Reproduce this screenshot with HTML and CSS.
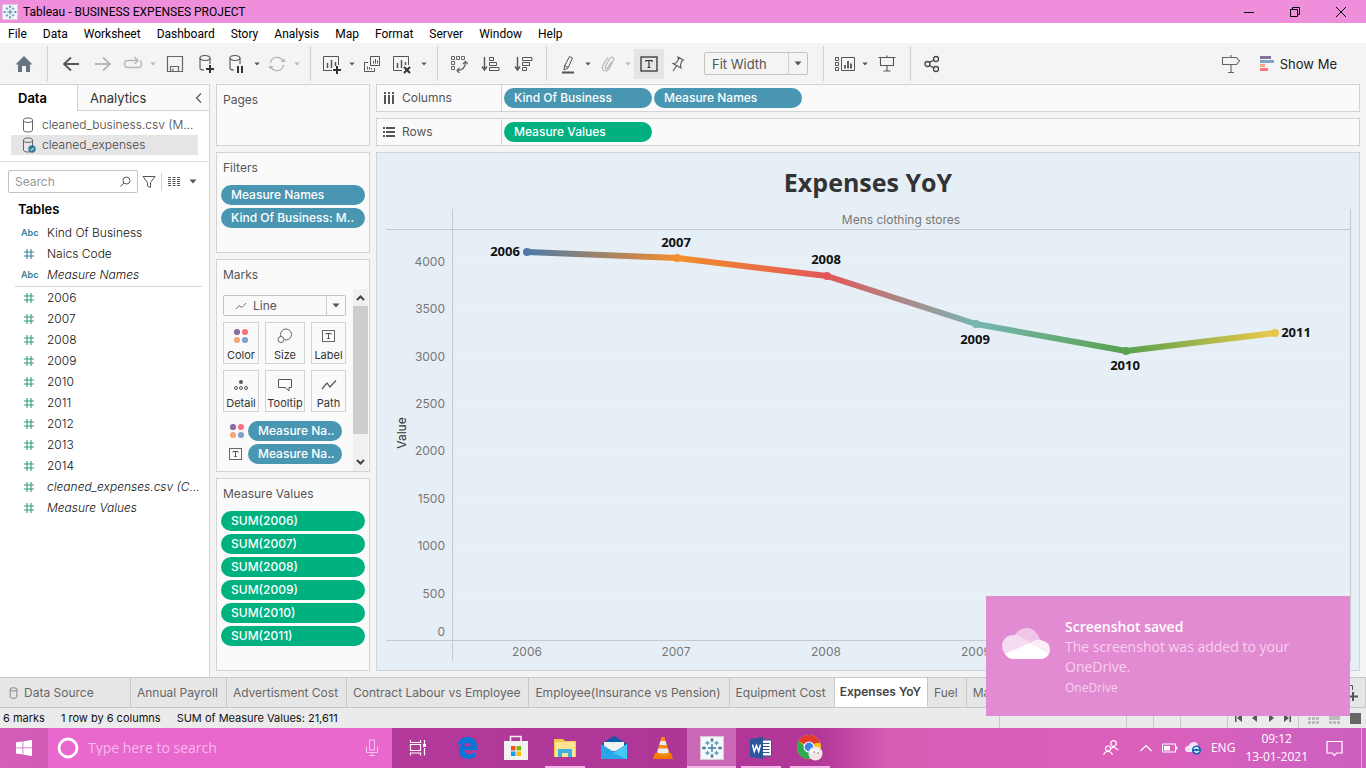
FILE: index.html
```html
<!DOCTYPE html>
<html lang="en">
<head>
<meta charset="utf-8">
<title>Tableau - BUSINESS EXPENSES PROJECT</title>
<link rel="stylesheet" href="styles.css">
</head>
<body>
<svg class="defs" width="0" height="0" aria-hidden="true">
  <symbol id="caret" viewBox="0 0 8 5"><path d="M0.500 0.500H7.500L4 4.500Z" fill="currentColor"/></symbol>
  <symbol id="dots" viewBox="0 0 16 16"><circle cx="4" cy="4" r="3.1" fill="#8a6d9c"/><circle cx="12" cy="4" r="3.1" fill="#fc7483"/><circle cx="4" cy="12" r="3.1" fill="#f3a877"/><circle cx="12" cy="12" r="3.1" fill="#80a3cd"/></symbol>
  <symbol id="textbox" viewBox="0 0 14 12"><rect x=".5" y=".5" width="12" height="11" fill="none" stroke="#666"/><path d="M4 4.5V3.5H9V4.5M6.5 3.5V8.5M5.2 8.5H7.8" fill="none" stroke="#555"/></symbol>
  <symbol id="cyl" viewBox="0 0 12 16"><path d="M1.5 3.5V13C1.5 14.3 3.5 15 6 15S10.500 14.300 10.500 13V3.500" fill="none" stroke="#666"/><ellipse cx="6" cy="3.200" rx="4.500" ry="2.200" fill="none" stroke="#666"/></symbol>
  <symbol id="hash" viewBox="0 0 12 12"><path d="M4 1V11M8 1V11M1 4H11M1 8H11" fill="none" stroke="currentColor" stroke-width="1.100"/></symbol>
  <symbol id="tableau" viewBox="0 0 24 24"><rect x=".5" y=".5" width="23" height="23" fill="#f4f7f9" stroke="#d9c7d8"/><g fill="none" stroke="#2d7d9e" stroke-width="1.300"><path d="M12 8V16M8 12H16"/><path d="M7.500 5V9M5.500 7H9.500M16.500 5V9M14.500 7H18.500M7.500 15V19M5.500 17H9.500M16.500 15V19M14.500 17H18.500" stroke="#5b9bb7"/><path d="M12 2V6M10.500 4H13.500M12 18V22M10.500 20H13.500M2 12H6M4 10.500V13.500M18 12H22M20 10.500V13.500" stroke="#44739b"/></g></symbol>
</svg>

<header class="titlebar">
  <svg class="logo" width="16" height="16"><use href="#tableau"/></svg>
  <span class="title">Tableau - BUSINESS EXPENSES PROJECT</span>
  <div class="winbtns">
    <button aria-label="Minimize"><svg width="12" height="12"><path d="M1 6.500H11" stroke="#000"/></svg></button>
    <button aria-label="Restore"><svg width="12" height="12" fill="none" stroke="#000"><path d="M1.500 3.500H8.500V10.500H1.500ZM3.500 3.500V1.500H10.500V8.500H8.500"/></svg></button>
    <button aria-label="Close"><svg width="12" height="12"><path d="M1 1L11 11M11 1L1 11" stroke="#000"/></svg></button>
  </div>
</header>

<nav class="menubar" aria-label="Main menu">
  <button>File</button><button>Data</button><button>Worksheet</button><button>Dashboard</button><button>Story</button><button>Analysis</button><button>Map</button><button>Format</button><button>Server</button><button>Window</button><button>Help</button>
</nav>

<div class="toolbar" role="toolbar" aria-label="Toolbar">
  <button class="tool wide" aria-label="Start page"><svg width="18" height="18"><path d="M9 1L17.500 9.500H15V17H11V11H7V17H3V9.500H.5Z" fill="#687382"/></svg></button>
  <span class="sep"></span>
  <button class="tool wide" aria-label="Undo"><svg width="18" height="18" fill="none" stroke="#555" stroke-width="1.800"><path d="M17 9H2M9 2.500L2 9L9 15.500"/></svg></button>
  <button class="tool wide" aria-label="Redo"><svg width="18" height="18" fill="none" stroke="#b5b5b5" stroke-width="1.800"><path d="M1 9H16M9 2.500L16 9L9 15.500"/></svg></button>
  <button class="tool" aria-label="Replay"><svg width="20" height="16" fill="none" stroke="#b5b5b5" stroke-width="1.400"><path d="M14 4.500H5Q1.500 4.500 1.500 8T5 11.500H15Q18.500 11.500 18.500 8Q18.500 5.500 17 5M11.500 1L15 4.500L11.500 8"/></svg></button>
  <button class="drop off" aria-label="Replay options"><svg width="6" height="4"><use href="#caret"/></svg></button>
  <button class="tool wide" aria-label="Save"><svg width="18" height="18" fill="none" stroke="#666" stroke-width="1.200"><path d="M1.500 1.500H16.500V16.500H1.500ZM4.500 16V11.500H12.500V16M7 16V13.500"/></svg></button>
  <button class="tool wide" aria-label="New data source"><svg width="18" height="20" fill="none" stroke="#555" stroke-width="1.100"><ellipse cx="7" cy="4" rx="5" ry="2.500"/><path d="M2 4V14Q2 16 6 16M12 4V10"/><path d="M12 11V19M8 15H16" stroke="#333" stroke-width="2"/></svg></button>
  <button class="tool" aria-label="Pause updates"><svg width="18" height="20" fill="none" stroke="#555" stroke-width="1.100"><ellipse cx="7" cy="4" rx="5" ry="2.500"/><path d="M2 4V14Q2 16 6 16M12 4V10"/><path d="M10 12V19M14 12V19" stroke="#333" stroke-width="2"/></svg></button>
  <button class="drop" aria-label="Update options"><svg width="6" height="4"><use href="#caret"/></svg></button>
  <button class="tool" aria-label="Refresh"><svg width="18" height="18" fill="none" stroke="#b5b5b5" stroke-width="1.400"><path d="M2.500 8A6.500 6.500 0 0 1 15 6.500M15.500 10A6.500 6.500 0 0 1 3 11.500"/><path d="M12.500 7H17.500L16 3.500ZM5.500 11H.5L2 14.500Z" fill="#b5b5b5" stroke="none"/></svg></button>
  <button class="drop off" aria-label="Refresh options"><svg width="6" height="4"><use href="#caret"/></svg></button>
  <span class="sep"></span>
  <button class="tool" aria-label="New worksheet"><svg width="20" height="20" fill="none" stroke="#555"><path d="M10 16.500H1.500V2.500H16.500V11"/><path d="M5.500 9V14M9.500 6V14M13.500 8V12" stroke-width="1.500"/><path d="M15 12V20M11 16H19" stroke="#333" stroke-width="2"/></svg></button>
  <button class="drop" aria-label="New sheet options"><svg width="6" height="4"><use href="#caret"/></svg></button>
  <button class="tool" aria-label="Duplicate"><svg width="18" height="18" fill="none" stroke="#555"><path d="M7.500 1.500H16.500V10.500H7.500ZM5 7.500H1.500V16.500H11.500V13M10.500 6V8.500M12.500 4V8.500M14.500 5.500V8.500M4.500 11.500V14.500M6.500 12V14.500M8.500 13V14.500"/></svg></button>
  <button class="tool wide" aria-label="Clear sheet"><svg width="20" height="20" fill="none" stroke="#555"><path d="M10 16.500H1.500V2.500H16.500V11"/><path d="M5.500 9V14M9.500 6V14M13.500 8V11" stroke-width="1.500"/><path d="M12 13L18 19M18 13L12 19" stroke="#333" stroke-width="2"/></svg></button>
  <button class="drop" aria-label="Clear options"><svg width="6" height="4"><use href="#caret"/></svg></button>
  <span class="sep"></span>
  <button class="tool" aria-label="Swap rows and columns"><svg width="18" height="18" fill="none" stroke="#666"><path d="M1.500 1.500H4.500V4.500H1.500ZM6.500 1.500H9.500V4.500H6.500ZM11.500 1.500H14.500V4.500H11.500ZM1.500 6.500H4.500V9.500H1.500ZM1.500 11.500H4.500V14.500H1.500Z"/><path d="M15.500 7Q15.500 15 7 15.500M13 9L15.500 6.500L18 9M9.500 13L7 15.500L9.500 18" stroke-width="1.300"/></svg></button>
  <button class="tool wider" aria-label="Sort ascending"><svg width="19" height="18" fill="none" stroke="#555"><path d="M3.500 2V14M1 11.500L3.500 15L6 11.500" stroke-width="1.400"/><path d="M8.500 2.500H12.500V5.500H8.500ZM8.500 7.500H15.500V10.500H8.500ZM8.500 12.500H18V15.500H8.500Z"/></svg></button>
  <button class="tool wide" aria-label="Sort descending"><svg width="19" height="18" fill="none" stroke="#555"><path d="M3.500 2V14M1 11.500L3.500 15L6 11.500" stroke-width="1.400"/><path d="M8.500 2.500H18V5.500H8.500ZM8.500 7.500H15.500V10.500H8.500ZM8.500 12.500H12.500V15.500H8.500Z"/></svg></button>
  <span class="sep"></span>
  <button class="tool" aria-label="Highlight"><svg width="14" height="20" fill="none" stroke="#555"><path d="M8.500 2.500L11.500 4L7 14L3 16L3.500 12ZM3.500 11.500L7 13.500"/><path d="M1 18.500H13" stroke-width="2"/></svg></button>
  <button class="drop" aria-label="Highlight options"><svg width="6" height="4"><use href="#caret"/></svg></button>
  <button class="tool" aria-label="Group"><svg width="14" height="18" fill="none" stroke="#b5b5b5" stroke-width="1.200"><path d="M10.500 7L6.500 13Q4.500 14.500 4 12L8.500 4Q11.500 0 13 4L8 14Q4 18 1.500 14Q1 12 2 10L7 2.500"/></svg></button>
  <button class="drop off" aria-label="Group options"><svg width="6" height="4"><use href="#caret"/></svg></button>
  <button class="tool pressed" aria-label="Show mark labels"><svg width="18" height="16" fill="none" stroke="#333"><rect x="1" y="1" width="16" height="14" stroke-width="1.300"/><path d="M6 6V4.500H12V6M9 4.500V11.500M7.500 11.500H10.500" stroke-width="1.200"/></svg></button>
  <button class="tool" aria-label="Fix axes"><svg width="14" height="18" fill="none" stroke="#555" stroke-width="1.100"><path d="M7 2L12.500 5L10.500 6.500L9.500 10L10 13L2 8.500L5 8L7.500 4.500ZM5.500 11L2 16"/></svg></button>
  <span class="select fit"><select aria-label="Fit"><option>Fit Width</option></select><svg width="8" height="5"><use href="#caret"/></svg></span>
  <span class="sep"></span>
  <button class="tool" aria-label="Show or hide cards"><svg width="20" height="16" fill="none" stroke="#555"><path d="M.5 1.500H3.500V4.500H.5ZM.5 6.500H3.500V9.500H.5ZM.5 11.500H3.500V14.500H.5ZM6.500 1.500H19.500V14.500H6.500Z"/><path d="M10 9V12.500M13 5V12.500M16 7.500V12.500" stroke-width="1.800"/></svg></button>
  <button class="drop" aria-label="Card options"><svg width="6" height="4"><use href="#caret"/></svg></button>
  <button class="tool wide" aria-label="Presentation mode"><svg width="18" height="18" fill="none" stroke="#555" stroke-width="1.100"><path d="M.5 2.500H17.500M2.500 2.500V10.500H15.500V2.500M9 .5V2M9 10.500V16M5.500 16H12.500"/></svg></button>
  <span class="sep"></span>
  <button class="tool" aria-label="Share"><svg width="16" height="18" fill="none" stroke="#444" stroke-width="1.300"><circle cx="3.500" cy="9" r="2.500"/><circle cx="12" cy="4" r="2.500"/><circle cx="12" cy="14" r="2.500"/><path d="M5.500 7.500L10 5M5.500 10.500L10 13"/></svg></button>
  <button class="tool guide" aria-label="Guide"><svg width="20" height="20" fill="none" stroke="#666" stroke-width="1.100"><path d="M1.500 3.500H15.500L18.500 7L15.500 10.500H1.500ZM10 1V3M10 10.500V18.500M7 18.500H13"/></svg></button>
  <button class="showme"><svg width="14" height="16"><path d="M0 0H11V3H0Z" fill="#85709a"/><path d="M0 4H14V7H0Z" fill="#80a3cd"/><path d="M0 8H5V11H0Z" fill="#f3a877"/><path d="M0 12H8V15H0Z" fill="#fc7483"/></svg>Show Me</button>
</div>

<main class="work">
  <aside class="data">
    <div class="panetabs"><button class="on">Data</button><button>Analytics<svg width="7" height="12"><path d="M6 1.500L1.500 6L6 10.500" fill="none" stroke="#555" stroke-width="1.200"/></svg></button></div>
    <ul class="sources">
      <li><svg width="12" height="16"><use href="#cyl"/></svg>cleaned_business.csv (M...</li>
      <li class="on"><svg width="14" height="16"><use href="#cyl" width="12" height="16"/><circle cx="10" cy="12" r="3.700" fill="#2e7d9c"/><path d="M8.300 12L9.600 13.300L11.800 10.800" stroke="#fff" fill="none"/></svg>cleaned_expenses</li>
    </ul>
    <div class="find">
      <label class="search"><input type="text" placeholder="Search" aria-label="Search"><svg width="11" height="11" fill="none" stroke="#555"><circle cx="6.500" cy="4.500" r="3.500"/><path d="M4 7L.5 10.500"/></svg></label>
      <button aria-label="Filter fields"><svg width="14" height="14"><path d="M1 1.500H13L8.500 7.500V12.500L5.500 11V7.500Z" fill="none" stroke="#555"/></svg></button>
      <span class="bar"></span>
      <button aria-label="View as"><svg width="12" height="11" stroke="#555"><path d="M0 1.500H12M0 3.500H12M0 5.500H12M0 7.500H12M0 9.500H12" stroke-dasharray="3 1.500"/></svg></button>
      <button aria-label="View options"><svg width="8" height="5"><use href="#caret"/></svg></button>
    </div>
    <h2>Tables</h2>
    <ul class="fields dims">
      <li><b>Abc</b>Kind Of Business</li>
      <li><i><svg width="12" height="12"><use href="#hash"/></svg></i>Naics Code</li>
      <li><b>Abc</b><em>Measure Names</em></li>
    </ul>
    <ul class="fields measures">
      <li><i><svg width="12" height="12"><use href="#hash"/></svg></i>2006</li>
      <li><i><svg width="12" height="12"><use href="#hash"/></svg></i>2007</li>
      <li><i><svg width="12" height="12"><use href="#hash"/></svg></i>2008</li>
      <li><i><svg width="12" height="12"><use href="#hash"/></svg></i>2009</li>
      <li><i><svg width="12" height="12"><use href="#hash"/></svg></i>2010</li>
      <li><i><svg width="12" height="12"><use href="#hash"/></svg></i>2011</li>
      <li><i><svg width="12" height="12"><use href="#hash"/></svg></i>2012</li>
      <li><i><svg width="12" height="12"><use href="#hash"/></svg></i>2013</li>
      <li><i><svg width="12" height="12"><use href="#hash"/></svg></i>2014</li>
      <li><i><svg width="12" height="12"><use href="#hash"/></svg></i><em>cleaned_expenses.csv (C...</em></li>
      <li><i><svg width="12" height="12"><use href="#hash"/></svg></i><em>Measure Values</em></li>
    </ul>
  </aside>

  <section class="cards">
    <div class="card pages"><h3>Pages</h3></div>
    <div class="card filters"><h3>Filters</h3>
      <button class="pill">Measure Names</button>
      <button class="pill">Kind Of Business: M..</button>
    </div>
    <div class="card marks"><h3>Marks</h3>
      <div class="scroller">
        <div class="markbody">
          <span class="select type"><svg class="lead" width="12" height="8"><path d="M1 7L4 3.500L7 5.500L11 1" fill="none" stroke="#777"/></svg><select aria-label="Mark type"><option>Line</option></select><svg width="8" height="5"><use href="#caret"/></svg></span>
          <div class="grid">
            <button><svg width="16" height="16"><use href="#dots"/></svg>Color</button>
            <button><svg width="16" height="16" fill="none" stroke="#666"><circle cx="9" cy="6.500" r="5.500"/><circle cx="4" cy="11.500" r="3" fill="#fafafa"/></svg>Size</button>
            <button><svg width="14" height="16" viewBox="0 -2 14 16"><use href="#textbox" width="14" height="12"/></svg>Label</button>
            <button><svg width="16" height="16" fill="none" stroke="#555"><circle cx="8" cy="6" r="2" fill="#555" stroke="none"/><circle cx="3" cy="12" r="1.500"/><circle cx="8" cy="12" r="1.500"/><circle cx="13" cy="12" r="1.500"/></svg>Detail</button>
            <button><svg width="16" height="16" fill="none" stroke="#555"><path d="M1.500 3.500H14.500V11.500H12V15L8 11.500H1.500Z"/></svg>Tooltip</button>
            <button><svg width="16" height="16" fill="none" stroke="#555" stroke-width="1.200"><path d="M1 13L6 7L9 11L15 4.500"/></svg>Path</button>
          </div>
          <div class="enc"><svg width="16" height="16"><use href="#dots"/></svg><button class="pill">Measure Na..</button></div>
          <div class="enc"><svg width="14" height="12"><use href="#textbox"/></svg><button class="pill">Measure Na..</button></div>
        </div>
        <div class="vbar"><svg width="9" height="6"><path d="M1 5L4.500 1.500L8 5" fill="none" stroke="#444" stroke-width="2"/></svg><span class="thumb"></span><svg width="9" height="6"><path d="M1 1L4.500 4.500L8 1" fill="none" stroke="#444" stroke-width="2"/></svg></div>
      </div>
    </div>
    <div class="card values"><h3>Measure Values</h3>
      <button class="pill green">SUM(2006)</button>
      <button class="pill green">SUM(2007)</button>
      <button class="pill green">SUM(2008)</button>
      <button class="pill green">SUM(2009)</button>
      <button class="pill green">SUM(2010)</button>
      <button class="pill green">SUM(2011)</button>
    </div>
  </section>

  <section class="sheet">
    <div class="shelf"><span class="name"><svg width="12" height="12" stroke="#555" stroke-width="2"><path d="M2 0V2M6 0V2M10 0V2M2 3V12M6 3V12M10 3V12"/></svg>Columns</span><button class="pill">Kind Of Business</button><button class="pill">Measure Names</button></div>
    <div class="shelf"><span class="name"><svg width="12" height="12" stroke="#555" stroke-width="2"><path d="M0 2H2M0 6H2M0 10H2M3 2H12M3 6H12M3 10H12"/></svg>Rows</span><button class="pill green">Measure Values</button></div>
    <div class="view">
      <h1>Expenses YoY</h1>
      <svg class="chart" viewBox="0 0 982 465" role="img" aria-label="Expenses by year, Mens clothing stores">
        <defs>
          <linearGradient id="g1"><stop offset="0" stop-color="#4e79a7"/><stop offset="1" stop-color="#f28e2b"/></linearGradient>
          <linearGradient id="g2"><stop offset="0" stop-color="#f28e2b"/><stop offset="1" stop-color="#e15759"/></linearGradient>
          <linearGradient id="g3"><stop offset="0" stop-color="#e15759"/><stop offset="1" stop-color="#76b7b2"/></linearGradient>
          <linearGradient id="g4"><stop offset="0" stop-color="#76b7b2"/><stop offset="1" stop-color="#59a14f"/></linearGradient>
          <linearGradient id="g5"><stop offset="0" stop-color="#59a14f"/><stop offset="1" stop-color="#edc948"/></linearGradient>
        </defs>
        <path class="gridline" d="M71 56.500H973M71 103.500H973M71 151.500H973M71 198.500H973M71 246.500H973M71 293.500H973M71 341.500H973M71 388.500H973M225.500 436V439M375.500 436V439M524.500 436V439M674.500 436V439M823.500 436V439"/>
        <path class="frame" d="M75.500 4V456M973.500 4V456M9 24.500H974M9 435.500H974"/>
        <g class="axis end"><text x="68" y="61">4000</text><text x="68" y="108">3500</text><text x="68" y="156">3000</text><text x="68" y="203">2500</text><text x="68" y="250">2000</text><text x="68" y="298">1500</text><text x="68" y="345">1000</text><text x="68" y="393">500</text><text x="68" y="431">0</text></g>
        <g class="axis mid"><text x="524" y="19">Mens clothing stores</text><text x="150" y="451">2006</text><text x="299" y="451">2007</text><text x="449" y="451">2008</text><text x="599" y="451">2009</text></g>
        <text class="ytitle" transform="translate(29 228) rotate(-90)">Value</text>
        <g stroke-width="6" stroke-linecap="round">
          <path d="M150 47L300 53" stroke="url(#g1)"/><path d="M300 53L450 71" stroke="url(#g2)"/><path d="M450 71L599 119" stroke="url(#g3)"/><path d="M599 119L749 146" stroke="url(#g4)"/><path d="M749 146L898 128" stroke="url(#g5)"/>
        </g>
        <circle cx="150" cy="47" r="4" fill="#4e79a7"/><circle cx="300" cy="53" r="4" fill="#f28e2b"/><circle cx="450" cy="71" r="4" fill="#e15759"/><circle cx="599" cy="119" r="4" fill="#76b7b2"/><circle cx="749" cy="146" r="4" fill="#59a14f"/><circle cx="898" cy="128" r="4" fill="#e5c54b"/>
        <g class="labels"><text x="128" y="51">2006</text><text x="299" y="42">2007</text><text x="449" y="59">2008</text><text x="598" y="139">2009</text><text x="748" y="165">2010</text><text x="919" y="132">2011</text></g>
      </svg>
    </div>
  </section>
</main>

<nav class="sheettabs" aria-label="Sheets">
  <button class="source"><svg width="9" height="12"><use href="#cyl"/></svg>Data Source</button><button>Annual Payroll</button><button>Advertisment Cost</button><button>Contract Labour vs Employee</button><button>Employee(Insurance vs Pension)</button><button>Equipment Cost</button><button class="on">Expenses YoY</button><button>Fuel</button><button class="last">Ma</button>
  <button class="add" aria-label="New sheet"><svg width="16" height="20" fill="none" stroke="#555"><path d="M4 2.500H6.500V7"/><path d="M7 9V18M2 13.500H12" stroke-width="2"/></svg></button>
</nav>

<footer class="status">
  <span>6 marks</span><span>1 row by 6 columns</span><span>SUM of Measure Values: 21,611</span>
  <div class="cells"><i class="c1"></i><i class="c2"></i><i class="c2"></i><i class="c3"></i>
    <div class="nav">
      <button aria-label="First"><svg width="8" height="8"><path d="M0 0H1.500V8H0ZM7 0V8L2 4Z" fill="#555"/></svg></button><button aria-label="Previous"><svg width="8" height="8"><path d="M6 0V8L1 4Z" fill="#555"/></svg></button><button aria-label="Next"><svg width="8" height="8"><path d="M2 0V8L7 4Z" fill="#555"/></svg></button><button aria-label="Last"><svg width="8" height="8"><path d="M1 0V8L6 4ZM6.500 0H8V8H6.500Z" fill="#555"/></svg></button>
    </div>
    <div class="modes">
      <button aria-label="Tabs view"><svg width="11" height="11" fill="#bbb"><path d="M0 0H3V3H0ZM4 0H7V3H4ZM8 0H11V3H8ZM0 4H3V7H0ZM4 4H7V7H4ZM8 4H11V7H8ZM0 8H3V11H0ZM4 8H7V11H4ZM8 8H11V11H8Z"/></svg></button>
      <button aria-label="Filmstrip view"><svg width="11" height="11" fill="#bbb"><path d="M0 0H11V7H0ZM0 8H3V11H0ZM4 8H7V11H4ZM8 8H11V11H8Z"/></svg></button>
      <button aria-label="Single view"><svg width="11" height="11"><path d="M0 0H11V11H0Z" fill="#666"/></svg></button>
    </div>
  </div>
</footer>

<div class="taskbar">
  <button class="start" aria-label="Start"><svg width="16" height="16" fill="#fff"><path d="M0 2.300L6.500 1.400V7.500H0ZM7.300 1.300L16 0V7.500H7.300ZM0 8.300H6.500V14.500L0 13.600ZM7.300 8.300H16V16L7.300 14.700Z"/></svg></button>
  <label class="tasksearch"><svg width="22" height="22"><circle cx="11" cy="11" r="9" fill="none" stroke="#fff" stroke-width="2.800"/></svg><input type="text" placeholder="Type here to search" aria-label="Type here to search"><svg width="12" height="18" fill="none" stroke="#f7c2ee"><rect x="3.500" y="1" width="5" height="10"/><path d="M.5 7.500V13.500H11.500V7.500M6 13.500V16.500M3 16.500H9"/></svg></label>
  <div class="apps">
    <button aria-label="Task view"><svg width="18" height="18" fill="none" stroke="#fff" stroke-width="1.200"><path d="M1.500 1V3.500H11.500V1M1.500 16.500V14H11.500V16.500M1.500 5.500H11.500V11.500H1.500ZM15.500 1V5M15.500 9V16.500"/><path d="M14 5H17V8H14Z" fill="#fff" stroke="none"/></svg></button>
    <button aria-label="Edge"><svg width="22" height="22"><path d="M1 9.500C2 3.500 6 0 11.500 0C17.500 0 21 4.500 21 10V13H8C8.500 17.500 14.500 18.500 19 15.500V20C11.500 24 2.500 21 3 13C3.200 9.500 5.500 7 8 6C5 6 2.500 7.500 1 9.500ZM8 9.500H15C15 4.500 8.500 4.500 8 9.500Z" fill="#0078d7" fill-rule="evenodd"/></svg></button>
    <button aria-label="Store"><svg width="24" height="26"><path d="M6.500 7V1.500H17V7" fill="none" stroke="#eee" stroke-width="1.600"/><path d="M0 6H24V25H0Z" fill="#f2f2f2"/><path d="M7 11H11.500V15.500H7Z" fill="#f25022"/><path d="M12.500 11H17V15.500H12.500Z" fill="#7fba00"/><path d="M7 16.500H11.500V21H7Z" fill="#00a4ef"/><path d="M12.500 16.500H17V21H12.500Z" fill="#ffb900"/></svg></button>
    <button class="open" aria-label="File Explorer"><svg width="22" height="20"><path d="M0 1H9L11 3H22V19H0Z" fill="#f3c94c"/><path d="M1 4H21V19H1Z" fill="#ffe391"/><path d="M4 11H18V19H14V15H8V19H4Z" fill="#38b1e4"/></svg></button>
    <button aria-label="Mail"><svg width="26" height="24"><path d="M0 8L13 0L26 8V12H0Z" fill="#0b5ba8"/><path d="M3 6H23V15H3Z" fill="#f2f2f2"/><path d="M0 8L13 16L26 8V23H0Z" fill="#27a6e8"/><path d="M26 8L12 17L25 23H26Z" fill="#43c9f7"/></svg></button>
    <button aria-label="VLC"><svg width="20" height="24"><path d="M2 17H18L20 23H0Z" fill="#f47a00"/><path d="M8.500 1H11.500L17 19Q10 22 3 19Z" fill="#f58a14"/><path d="M7.500 5H12.500L13.600 9H6.400ZM5.300 12.500H14.700L15.800 16.500Q10 18.500 4.200 16.500Z" fill="#e9edf0"/></svg></button>
    <button class="open active" aria-label="Tableau"><svg width="24" height="24"><use href="#tableau"/></svg></button>
    <button class="open" aria-label="Word"><svg width="22" height="22"><path d="M11 3H21.500V19H11Z" fill="#fff" stroke="#2b579a"/><path d="M13 6.500H19.500M13 9.500H19.500M13 12.500H19.500M13 15.500H19.500" stroke="#2b579a"/><path d="M0 2L13 0V22L0 20Z" fill="#2b579a"/><path d="M2.500 7.500L4.300 14.500L6.500 8.500L8.700 14.500L10.500 7.500" fill="none" stroke="#fff" stroke-width="1.500"/></svg></button>
    <button class="open" aria-label="Chrome"><svg width="26" height="26"><circle cx="12" cy="12" r="12" fill="#fbc117"/><path d="M12 12L1.600 6A12 12 0 0 1 22.400 6Z" fill="#e33b2e"/><path d="M1.600 6A12 12 0 0 0 12 24L14 17Z" fill="#2da94f"/><path d="M7 6H22.400V8H7Z" fill="#e33b2e"/><circle cx="12" cy="12" r="5.500" fill="#fff"/><circle cx="12" cy="12" r="4.400" fill="#3f81ec"/><circle cx="18.500" cy="18.500" r="7" fill="#f1e6e8"/><path d="M13 16Q18 12 23 17L22 19Q18 16 14 18.500Z" fill="#fff"/><path d="M16 17H18M20 18H22" stroke="#8b6a70"/></svg></button>
  </div>
  <div class="tray">
    <button class="people" aria-label="People"><svg width="16" height="16" fill="none" stroke="#fff" stroke-width="1.200"><circle cx="10.500" cy="3.500" r="2.800"/><path d="M7.500 9Q10.500 5.500 15 10"/><circle cx="5" cy="8.500" r="2.500"/><path d="M.8 15Q1.500 11.500 5 11.500T9.500 15"/></svg></button>
    <button class="tray-i" aria-label="Hidden icons"><svg width="12" height="8"><path d="M.5 7L6 1.500L11.500 7" fill="none" stroke="#fff" stroke-width="1.200"/></svg></button>
    <button class="tray-i" aria-label="Battery"><svg width="16" height="10"><path d="M.5 1H13.500V9H.5Z" fill="none" stroke="#fff"/><path d="M2 3H8V7.500H2ZM14 3.500H15.500V6.500H14Z" fill="#fff"/></svg></button>
    <button class="tray-i" aria-label="OneDrive"><svg width="17" height="14"><path d="M3 11Q0 11 0 8T4 4.500Q5 1 9 1T13 6Q15 7 15 11Z" fill="#f7e3f3"/><circle cx="11.500" cy="9" r="4.600" fill="#0b66b8"/><path d="M9 8Q11.500 5.500 13.500 8M14 10Q11.500 12.500 9.500 10" fill="none" stroke="#fff" stroke-width="1.300"/></svg></button>
    <span class="lang">ENG</span>
    <time><span>09:12</span><span>13-01-2021</span></time>
    <button class="notif" aria-label="Notifications"><svg width="17" height="17"><path d="M1 1.500H16V13H10.500L8.500 15.500L6.500 13H1Z" fill="none" stroke="#fff" stroke-width="1.200"/></svg></button>
  </div>
</div>

<div class="toast" role="status">
  <svg width="48" height="32"><path d="M11 10Q16 0 25 0T39 13L28 16L12 12Z" fill="#efc6e8"/><path d="M3 26Q-1 21 .5 15Q3 7 12 7Q18 7 29 15L5 27Z" fill="#f6dcf1"/><path d="M28 15Q33 11 39 12Q48 14 48 22Q48 25 46 27Z" fill="#fbeef8"/><path d="M3 26L28 15L47 26Q44 31 38 31H11Q6 31 3 26Z" fill="#fff"/></svg>
  <div><strong>Screenshot saved</strong><p>The screenshot was added to your OneDrive.</p><small>OneDrive</small></div>
</div>
</body>
</html>
```
FILE: styles.css
```css
* { box-sizing: border-box; }
body {
  margin: 0;
  height: 100vh;
  display: flex;
  flex-direction: column;
  overflow: hidden;
  background: #f4f4f4;
  color: #333;
  font: 12px/16px Inter, "Noto Sans", sans-serif;
}
.defs { position: absolute; }
button, input, select {
  font: inherit;
  color: inherit;
  border: 0;
  padding: 0;
  margin: 0;
  background: none;
  white-space: nowrap;
}
svg { display: block; flex: none; }
ul { list-style: none; margin: 0; padding: 0; }
h1, h2, h3, p { margin: 0; }

/* window chrome */
.titlebar {
  height: 23px;
  flex: none;
  display: flex;
  align-items: center;
  padding-left: 2px;
  background: #ef8fdc;
  color: #000;
  font-family: Roboto, sans-serif;
}
.titlebar .title { margin-left: 5px; }
.winbtns { margin-left: auto; display: flex; padding-right: 2px; }
.winbtns button { width: 46px; height: 22px; display: grid; place-items: center; }
.menubar {
  height: 20px;
  flex: none;
  display: flex;
  background: #fff;
  color: #000;
  font-family: Roboto, sans-serif;
}
.menubar button { padding: 2px 8px 0; }

/* toolbar */
.toolbar {
  height: 41px;
  flex: none;
  display: flex;
  align-items: center;
  padding: 0 29px 0 8px;
  color: #555;
}
.tool { width: 28px; height: 30px; display: grid; place-items: center; }
.tool.wide { width: 32px; }
.tool.wider { width: 34px; }
.tool.pressed { width: 30px; background: #e5e5e5; }
.drop { width: 12px; height: 30px; display: grid; place-items: center; }
.drop.off { color: #b5b5b5; }
.sep { width: 1px; height: 35px; margin: 0 7px; background: #d0d0d0; }
.select {
  position: relative;
  display: flex;
  align-items: center;
  border: 1px solid #c4c4c4;
  border-radius: 2px;
  background: #fafafa;
  color: #555;
}
.select select { appearance: none; flex: 1; height: 100%; outline: 0; }
.select > svg:last-child { position: absolute; right: 5px; pointer-events: none; }
.fit { width: 104px; height: 23px; margin: 0 8px 0 12px; background: #f4f4f4; font-size: 13px; }
.fit select {
  padding-left: 7px;
  background: linear-gradient(#d0d0d0, #d0d0d0) right 18px top / 1px 100% no-repeat;
}
.guide { margin-left: auto; margin-right: 15px; }
.showme { display: flex; align-items: center; gap: 6px; font-size: 13px; color: #222; }

/* work area */
.work { flex: 1; min-height: 0; display: flex; gap: 6px; padding-right: 6px; }
.data {
  width: 210px;
  flex: none;
  background: #fff;
  border: solid #d3d3d3;
  border-width: 1px 1px 0 0;
}
.panetabs { display: flex; height: 26px; font-size: 13px; }
.panetabs button {
  flex: 1;
  display: flex;
  align-items: center;
  justify-content: space-between;
  padding: 0 7px 0 12px;
  background: #fafafa;
  border: solid #d3d3d3;
  border-width: 0 0 1px 1px;
}
.panetabs .on {
  flex: none;
  width: 77px;
  padding: 0 0 0 18px;
  background: #fff;
  border: 0;
  font-weight: 600;
  color: #000;
}
.sources { padding: 4px 11px 6px; border-bottom: 1px solid #e0e0e0; color: #444; font-weight: 300; }
.sources li { height: 20px; display: flex; align-items: center; padding-left: 11px; gap: 8px; }
.sources li.on { background: #e5e5e5; gap: 6px; }
.find { display: flex; align-items: center; padding: 8px 0 0 8px; color: #555; }
.find button { padding: 0 4px; margin-right: 1px; }
.find .bar { width: 1px; height: 18px; background: #d3d3d3; margin-right: 2px; }
.search {
  width: 130px;
  flex: none;
  height: 23px;
  display: flex;
  align-items: center;
  padding: 0 6px;
  border: 1px solid #c4c4c4;
  border-radius: 2px;
}
.search input { width: 100%; min-width: 0; outline: 0; }
.search input::placeholder { color: #999; opacity: 1; }
.data h2 { padding: 8px 18px 5px; font-size: 13px; line-height: 16px; font-weight: 600; color: #000; }
.fields { color: #111; font-weight: 300; }
.fields li { height: 21px; display: flex; align-items: center; white-space: nowrap; }
.fields b, .fields i { width: 26px; flex: none; color: #33809c; }
.fields b { font-size: 9px; font-weight: 600; }
.fields i { padding-left: 2px; }
.dims { margin: 0 7px 0 15px; padding: 0 0 1px 6px; border-bottom: 1px solid #d8d8d8; }
.measures { padding-left: 21px; }
.measures i { color: #2f9c7c; }

/* cards */
.cards { width: 154px; flex: none; display: flex; flex-direction: column; gap: 6px; padding-bottom: 6px; }
.card { background: #fafafa; border: 1px solid #d3d3d3; padding: 7px 4px; display: flex; flex-direction: column; gap: 3px; }
.card h3 { padding: 0 2px; margin-bottom: 6px; font-size: 12px; line-height: 16px; font-weight: 400; color: #555; }
.pages { min-height: 62px; }
.filters { min-height: 101px; }
.values { flex: 1; }
.pill {
  height: 20px;
  flex: none;
  padding: 0 10px;
  border-radius: 10px;
  background: #4996b2;
  color: #fff;
  text-align: left;
  font-weight: 500;
}
.pill.green { background: #00b180; }
.marks { height: 213px; flex: none; padding: 7px 1px 0 4px; }
.marks h3 { margin-bottom: 3px; }
.scroller { flex: 1; min-height: 0; display: flex; justify-content: space-between; }
.markbody { width: 125px; padding: 6px 0 0 2px; }
.type { height: 21px; font-size: 12px; }
.type .lead { margin-left: 11px; }
.type select {
  padding-left: 6px;
  background: linear-gradient(#d0d0d0, #d0d0d0) right 18px top / 1px 100% no-repeat;
}
.grid { display: grid; grid-template-columns: 36px 40px 35px; gap: 6px; margin: 6px 0 9px; }
.grid button {
  height: 42px;
  display: flex;
  flex-direction: column;
  align-items: center;
  justify-content: flex-end;
  gap: 3px;
  border: 1px solid #d3d3d3;
  font-size: 11px;
  line-height: 16px;
}
.enc { height: 20px; margin-bottom: 3px; display: flex; align-items: center; justify-content: space-between; padding: 0 4px 0 6px; }
.enc .pill { width: 94px; }
.vbar { width: 15px; display: flex; flex-direction: column; align-items: center; padding: 6px 0; background: #f0f0f0; }
.thumb { width: 15px; height: 128px; margin: 5px 0 auto; flex: none; background: #cdcdcd; }

/* sheet */
.sheet { flex: 1; min-width: 0; display: flex; flex-direction: column; gap: 6px; padding-bottom: 6px; }
.shelf { height: 28px; flex: none; display: flex; align-items: center; gap: 2px; background: #fafafa; border: 1px solid #d3d3d3; }
.shelf .name { width: 125px; height: 26px; display: flex; align-items: center; gap: 7px; padding-left: 6px; border-right: 1px solid #d3d3d3; color: #555; }
.shelf .pill { width: 148px; }
.view { flex: 1; min-height: 0; display: flex; flex-direction: column; background: #e6eff5; border: 1px solid #d3d3d3; }
.view h1 { height: 52px; flex: none; padding-top: 12px; font: 700 25px/34px "Open Sans", sans-serif; color: #333; text-align: center; }
.chart { width: 100%; flex: 1; min-height: 0; }
.gridline { fill: none; stroke: #ecf2f5; }
.frame { fill: none; stroke: #c8c8c8; }
.axis { fill: #777; font-size: 12px; }
.end { text-anchor: end; }
.mid { text-anchor: middle; }
.ytitle { fill: #333; font-size: 12px; text-anchor: middle; }
.labels { fill: #111; font: 700 13px "Open Sans", sans-serif; text-anchor: middle; }

/* sheet tabs and status */
.sheettabs { height: 31px; flex: none; display: flex; background: #e6e6e6; border: solid #c8c8c8; border-width: 1px 1px 1px 0; color: #666; }
.sheettabs button { flex: none; padding: 0 8px 0 6px; border-right: 1px solid #c8c8c8; }
.sheettabs .source { width: 131px; display: flex; align-items: center; gap: 6px; padding-left: 9px; }
.sheettabs .on { padding: 0 6px 2px 5px; background: #fff; color: #444; font-weight: 600; }
.sheettabs .last { border: 0; }
.sheettabs .add { margin-left: auto; border: 0; padding: 0 3px; }
.status { height: 20px; flex: none; display: flex; align-items: center; gap: 16px; padding-left: 3px; background: #ebebeb; color: #111; font-size: 11px; }
.cells { margin-left: auto; height: 20px; display: flex; align-items: center; }
.cells i { height: 20px; border-left: 1px solid #c8c8c8; }
.c1 { width: 127px; }
.c2 { width: 27px; }
.c3 { width: 47px; }
.nav, .modes { height: 20px; display: flex; align-items: center; border-left: 1px solid #c8c8c8; }
.nav { width: 71px; padding-left: 7px; gap: 8px; }
.modes { width: 68px; padding-left: 9px; gap: 10px; }

/* taskbar */
.taskbar {
  height: 40px;
  flex: none;
  display: flex;
  color: #fff;
  background: linear-gradient(90deg, #d45fb8 0, #b33a9a 29%, #ae3696 50%, #b23898 60%, #d75cb4 65%, #dc60bb 82%, #cc60c0 100%);
  font-family: "Open Sans", sans-serif;
}
.start { width: 48px; display: grid; place-items: center; }
.tasksearch { width: 344px; display: flex; align-items: center; gap: 9px; padding: 0 14px 0 9px; background: #e868ce; font-size: 14px; }
.tasksearch input { flex: 1; min-width: 0; outline: 0; }
.tasksearch input::placeholder { color: #f9b9ec; opacity: 1; }
.apps { display: flex; padding-left: 1px; }
.apps button { width: 49px; display: grid; place-items: center; }
.apps .open { background: linear-gradient(#f6b5ea, #f6b5ea) center bottom / 40px 2px no-repeat; }
.apps .active { background: linear-gradient(#f6b5ea, #f6b5ea) center bottom / 100% 2px no-repeat #cb68b7; }
.tray { margin-left: auto; display: flex; align-items: center; padding-right: 4px; }
.tray::after { content: ""; width: 1px; height: 40px; background: #e79be0; }
.tray button { display: grid; place-items: center; }
.people { width: 46px; }
.tray-i { width: 24px; }
.lang { margin: 0 10px 0 5px; }
time { display: flex; flex-direction: column; align-items: center; line-height: 18px; }
.notif { width: 53px; }

/* notification */
.toast {
  position: fixed;
  right: 16px;
  bottom: 52px;
  width: 364px;
  height: 120px;
  display: flex;
  gap: 15px;
  padding: 21px 40px 0 16px;
  background: #e28bd2;
  color: #f7d0f0;
  font: 14px/20px "Open Sans", sans-serif;
}
.toast svg { margin-top: 11px; }
.toast strong { display: block; font-weight: 600; color: #fff; }
.toast small { display: block; font-size: 12px; line-height: 22px; }
```
